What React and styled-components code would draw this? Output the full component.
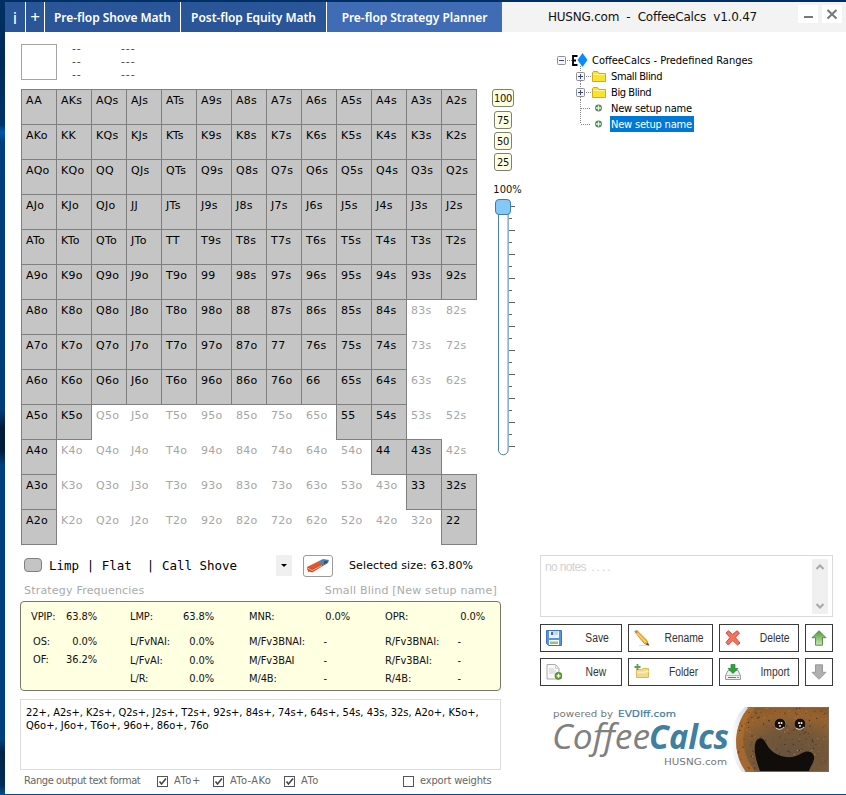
import React from 'react';
import styled, { createGlobalStyle } from 'styled-components';

const Global = createGlobalStyle`
  * { box-sizing: border-box; }
  html, body { margin: 0; padding: 0; }
  body { width: 846px; height: 795px; overflow: hidden; }
`;

const verdana = `'DejaVu Sans', Verdana, sans-serif`;
const tahoma = `'DejaVu Sans Condensed', 'DejaVu Sans', Tahoma, sans-serif`;

const Desktop = styled.div`
  width: 846px;
  height: 795px;
  padding: 2px 0 1px 5px;
  background: linear-gradient(#002f63 0, #002b58 60px, #003468 125px, #0058a8 132px, #003f7c 142px, #003c78 410px, #001b3c 428px, #001b3c 450px, #004080 466px, #00407c 740px, #002448 752px, #002c58 785px, #0a4a8c 794px);
`;
const Window = styled.main`
  display: flex;
  flex-direction: column;
  width: 841px;
  height: 792px;
  background: #fff;
  font-family: ${verdana};
  font-size: 11px;
  color: #111;
  white-space: pre;
`;

const Header = styled.header`
  display: flex;
  height: 30px;
  background: #f3f3f3;
`;
const Tab = styled.div`
  flex: none;
  width: ${p => p.$w}px;
  height: 30px;
  text-align: center;
  border-right: ${p => (p.$active ? 0 : 1)}px solid #fff;
  background: ${p => (p.$active ? '#3f6cb5' : '#2a5699')};
  color: #fff;
  font: ${p => p.$font || "600 12px/31px 'Noto Sans', 'Open Sans', sans-serif"};
  letter-spacing: -0.05px;
`;
const Title = styled.div`
  flex: 1;
  padding-left: 46px;
  font-size: 12px;
  line-height: 31px;
  letter-spacing: -0.22px;
`;
const WinButton = styled.div`
  width: 20px;
  height: 18px;
  margin: 3px 4px 0 0;
  background: #fff;
  svg { display: block; }
`;

const Body = styled.div`
  display: grid;
  grid-template-columns: 535px 306px;
  height: 762px;
`;
const Left = styled.section`
  padding: 12px 0 0 15px;
`;
const Info = styled.div`
  display: flex;
  height: 45px;
  padding-left: 1px;
`;
const Preview = styled.div`
  width: 36px;
  height: 36px;
  border: 1px solid #a5a5a5;
`;
const Dashes = styled.div`
  width: ${p => p.$w}px;
  margin: -2px 0 0 15px;
  font: 11px/13px ${verdana};
  letter-spacing: 0.9px;
  color: #444;
`;
const RangeArea = styled.div`
  display: flex;
  height: 456px;
  padding-left: 1px;
`;
const Matrix = styled.div`
  display: grid;
  grid-template-columns: repeat(13, 35px);
  grid-auto-rows: 35px;
`;
const Cell = styled.div`
  width: 36px;
  height: 36px;
  padding: 4px 0 0 4px;
  line-height: 14px;
  font-size: 11px;
  letter-spacing: 0.3px;
  border: 1px solid ${p => (p.$on ? '#7f7f7f' : 'transparent')};
  background: ${p => (p.$on ? '#c5c5c5' : 'transparent')};
  color: ${p => (p.$on ? '#000' : '#a6a6a6')};
`;
const Weights = styled.div`
  display: flex;
  flex-direction: column;
  align-items: center;
  margin-left: 15px;
  width: 24px;
`;
const Weight = styled.div`
  height: 18px;
  width: ${p => p.$w}px;
  margin-bottom: ${p => p.$gap}px;
  border: 1px solid #808070;
  border-radius: 3px;
  background: #ffffe1;
  text-align: center;
  font: 11px/17px ${tahoma};
  letter-spacing: -0.3px;
`;
const Percent = styled.div`
  margin: 11px 0 0 9px;
  font: 11px/16px ${tahoma};
  letter-spacing: 0;
`;

const Row = styled.div`
  display: flex;
  align-items: center;
  height: 41px;
`;
const Swatch = styled.div`
  width: 18px;
  height: 14px;
  margin: -2px 7px 0 4px;
  border: 1px solid #808080;
  border-radius: 4px;
  background: #c4c4c4;
`;
const Actions = styled.div`
  width: 227px;
  font: 12.5px/16px 'DejaVu Sans Mono', monospace;
  color: #000;
`;
const DropButton = styled.div`
  display: grid;
  place-items: center;
  width: 16px;
  height: 21px;
  background: #f0f0f0;
`;
const EraserButton = styled.div`
  display: grid;
  place-items: center;
  width: 30px;
  height: 22px;
  margin: 0 16px 0 11px;
  border: 1px solid #9a9a9a;
  border-radius: 3px;
`;
const Selected = styled.span`
  font-size: 11px;
  letter-spacing: 0.12px;
  color: #000;
`;
const Caption = styled.div`
  display: flex;
  justify-content: space-between;
  width: 481px;
  height: 15px;
  padding: 0 4px;
  line-height: 9px;
  color: #aaa;
  letter-spacing: 0.2px;
`;
const Stats = styled.div`
  display: grid;
  grid-template-columns: 99px 119px 136px 110px;
  height: 90px;
  width: 481px;
  padding: 7px 0 0 10px;
  border: 1px solid #77776a;
  border-radius: 4px;
  background: #ffffe1;
`;
const Stat = styled.div`
  display: flex;
  justify-content: space-between;
  height: ${p => p.$h}px;
  width: ${p => p.$w}px;
  padding-left: ${p => p.$indent || 0}px;
  padding-right: ${p => p.$right || 0}px;
  font: 11px/16px ${tahoma};
  letter-spacing: -0.1px;
`;
const Output = styled.div`
  width: 481px;
  height: 71px;
  margin-top: 8px;
  padding: 6px 5px;
  border: 1px solid #dcdcdc;
  font: 11px/13px ${tahoma};
  color: #000;
`;
const Formats = styled.div`
  display: flex;
  align-items: center;
  height: 22px;
  padding-left: 4px;
  font: 11px/14px ${tahoma};
  color: #666;
`;
const FormatLabel = styled.span`
  width: ${p => p.$w}px;
  letter-spacing: ${p => p.$ls || 0}px;
`;
const Box = styled.span`
  display: block;
  width: 11px;
  height: 11px;
  margin-right: 6px;
  border: 1px solid #555;
  svg { display: block; }
`;

const Right = styled.section`
  display: flex;
  flex-direction: column;
  width: 293px;
`;
const Tree = styled.div`
  height: 523px;
  padding: 20px 0 0 17px;
  font: 11px/16px ${tahoma};
  color: #000;
`;
const Node = styled.div`
  display: flex;
  align-items: center;
  height: 16px;
  letter-spacing: ${p => p.$ls || 0}px;
  svg { display: block; flex: none; }
`;
const NodeText = styled.span`
  height: 16px;
  line-height: 17px;
  padding: 0 2px 0 1px;
  background: ${p => (p.$selected ? '#0078d7' : 'transparent')};
  color: ${p => (p.$selected ? '#fff' : '#000')};
`;
const Notes = styled.div`
  display: flex;
  justify-content: space-between;
  height: 62px;
  padding: 3px 4px;
  border: 1px solid #d9d9d9;
  color: #d2d2d2;
  font: 12px/16px 'Liberation Sans', Arial, sans-serif;
  letter-spacing: -0.65px;
`;
const Scroll = styled.div`
  display: flex;
  flex-direction: column;
  justify-content: space-between;
  align-items: center;
  width: 16px;
  height: 55px;
  padding: 5px 0;
  background: #f0f0f0;
`;
const Buttons = styled.div`
  display: grid;
  grid-template-columns: 82px 85px 80px 28px;
  grid-auto-rows: 28px;
  gap: 6px;
  margin-top: 7px;
`;
const Button = styled.div`
  display: flex;
  align-items: center;
  padding-left: 5px;
  border: 1px solid #3a3a3a;
  color: #333;
  font: 12px/16px 'Liberation Sans', Arial, sans-serif;
  svg { display: block; flex: none; }
`;
const ButtonLabel = styled.span`
  flex: 1;
  padding-left: ${p => p.$pad}px;
  text-align: center;
  transform: scaleX(0.86);
`;
const Brand = styled.div`
  margin: 21px 0 0 13px;
  svg { display: block; }
`;

const RANKS = 'AKQJT98765432';
const FILLED = [13, 13, 13, 13, 13, 13, 11, 11, 11];
const isOn = (r, c) => {
  if (r < 9) return c < FILLED[r];
  if (r === 9) return c < 2 || c === 9 || c === 10;
  if (r === 10) return c === 0 || c === 10 || c === 11;
  if (r === 11) return c === 0 || c === 11 || c === 12;
  return c === 0 || c === 12;
};
const hand = (r, c) =>
  r === c ? RANKS[r] + RANKS[r] : r < c ? `${RANKS[r]}${RANKS[c]}s` : `${RANKS[c]}${RANKS[r]}o`;

const SliderTrack = () => (
  <svg width="24" height="260" viewBox="0 0 24 260">
    <path d="M3.5 9V251a4.8 4.8 0 0 0 9.600 0V9" fill="#fff" stroke="#4a7fa8" />
    {Array.from({ length: 21 }, (_, i) => (
      <path key={i} d={`M14 ${7.5 + i * 12}h${i % 2 ? 3 : 6}`} stroke="#666" />
    ))}
    <rect x="0.500" y="0.500" width="15" height="15" rx="3.500" fill="#84c8f8" stroke="#3d7eae" />
  </svg>
);
const Slider = styled.div`
  margin: 1px 0 0 4px;
  align-self: flex-start;
  svg { display: block; }
`;

const Eraser = () => (
  <svg width="24" height="16" viewBox="0 0 24 16">
    <path d="M1 9L13 3l4 4-11 6-4 1z" fill="#e2562b" />
    <path d="M13 3l4-2 6 1-1 3-5 3-4-2z" fill="#5583b0" />
    <path d="M18 3l4-.5-1 2.500-3 1.500z" fill="#34566f" />
    <path d="M1 9l5 2 11-5v2L6 14.500 2 12.500z" fill="#d04a20" />
    <path d="M1.500 10l4.500 2.500 10-5" stroke="#f6b39c" fill="none" />
  </svg>
);
const Check = ({ on }) => (
  <Box>
    {on && (
      <svg width="9" height="9" viewBox="0 0 9 9">
        <path d="M1.500 4.500l2 2.500L8 1.500" fill="none" stroke="#444" strokeWidth="1.600" />
      </svg>
    )}
  </Box>
);
const Toggle = ({ x, plus }) => (
  <g>
    <rect x={x + 0.5} y="4.500" width="8" height="8" rx="1" fill="#f5f5f5" stroke="#8f8f8f" />
    <path d={`M${x + 2} 8.500h5${plus ? `M${x + 4.5} 6v5` : ''}`} stroke="#36478c" />
  </g>
);
const dots = { stroke: '#888', strokeDasharray: '1 1', fill: 'none' };
const RootIcon = () => (
  <svg width="34" height="16">
    <Toggle x={0} />
    <path d="M10 8.500h5M23.500 14v2" {...dots} />
    <path d="M20.500 4h-4.500v9h4.500M16 8.500h3" stroke="#000" strokeWidth="1.800" fill="none" />
    <path d="M25.500 1l5 7-5 7-5-7z" fill="#0a8cff" />
  </svg>
);
const FolderNodeIcon = () => (
  <svg width="53" height="16">
    <path d="M23.500 0v4M23.500 13v3M29 8.500h5" {...dots} />
    <Toggle x={19} plus />
    <path d="M35.500 13.500v-9l1-1h4l1.500 2h6.500v8z" fill="#fbe32e" stroke="#d0a91c" />
    <path d="M36.500 6.500h11" stroke="#fff59a" />
  </svg>
);
const LeafIcon = ({ last }) => (
  <svg width="53" height="16">
    <path d={`M23.500 0v${last ? 8 : 16}M24 8.500h10`} {...dots} />
    <circle cx="41.500" cy="8" r="3.400" fill="#4d8950" />
    <path d="M39 8h5M41.500 5.500v5" stroke="#e5f3e2" strokeWidth="1.300" />
  </svg>
);
const Chevron = ({ down }) => (
  <svg width="8" height="6" viewBox="0 0 8 6">
    <path d={down ? 'M0.500 1l3.500 3.500L7.500 1' : 'M0.500 5L4 1.500 7.500 5'} fill="none" stroke="#a8a8a8" strokeWidth="2" />
  </svg>
);

const icons = {
  save: (
    <>
      <path d="M.5.500h15v15h-13l-2-2z" fill="#5b93dc" stroke="#3f74bd" />
      <path d="M3 1h10v7H3z" fill="#e9f3fd" />
      <path d="M5 1h7v4H5z" fill="#c2d8ef" />
      <path d="M5 2h2v3H5z" fill="#3b70b8" />
      <path d="M3 10h10v5H3z" fill="#fff" />
      <path d="M4 11.500h8v2.500H4z" fill="#8dc86c" />
    </>
  ),
  rename: (
    <>
      <path d="M5 15.500h10" stroke="#ddd" />
      <path d="M.7 1.600L2.800.4 13 10.500l1.700 4.700-4.500-1.800z" fill="#f6b93b" stroke="#c07d18" strokeWidth=".8" />
      <path d="M2 2.500l9.500 9.500" stroke="#ffe18b" />
      <path d="M.7 1.600L2.800.4l1.500 1.700-2 1.500z" fill="#d87b62" />
      <path d="M13 12.800l2.500 2.700-3.500-1z" fill="#443" />
    </>
  ),
  del: (
    <path d="M1 3l2.500-2.200L7.500 4.500 12 .8 14.500 3l-4.200 4.500L15 13l-2.500 2-4.700-4.500L3.300 15 1 12.500l4-5z" fill="#f4735e" stroke="#d04a3a" />
  ),
  up: <path d="M8 .7l7 7h-3.500v7.500h-7V7.700H1z" fill="url(#upFill)" stroke="#5c8f47" />,
  fresh: (
    <>
      <path d="M1 .5h8.500l3.500 4v10.500H1z" fill="#f8f8f8" stroke="#aaa" />
      <path d="M9.500.5v4H13M3 5h5M3 7h7M3 9h6" fill="none" stroke="#ccc" />
      <circle cx="12.500" cy="11.800" r="3.600" fill="#5aa02c" stroke="#3c7d1b" strokeWidth=".6" />
      <path d="M10.500 11.800h4M12.500 9.800v4" stroke="#fff" strokeWidth="1.300" />
    </>
  ),
  folder: (
    <>
      <path d="M2.500 13.500v-8h5L9 4.500h5.500v9z" fill="#f4d98a" stroke="#dcba5c" />
      <path d="M3.500 8.500h7l1-1h3" fill="none" stroke="#fff1bc" strokeWidth="1.500" />
      <path d="M.5 3h6M3.500 0v6" stroke="#5da04c" strokeWidth="1.800" />
    </>
  ),
  load: (
    <>
      <path d="M3 6.500h10l2.500 5v4H.5v-4z" fill="#eee" stroke="#999" />
      <path d="M1 11.500h14" stroke="#bbb" />
      <path d="M3 13.500h8" stroke="#777" />
      <path d="M12 13.500h2" stroke="#65bb45" />
      <path d="M6 0.500h4v4h3l-5 5-5-5h3z" fill="#31a437" stroke="#1e8128" strokeWidth=".7" />
    </>
  ),
  down: <path d="M8 15.300l7-7h-3.500V.800h-7v7.500H1z" fill="#b0b0b0" stroke="#9a9a9a" />,
};
const Icon = ({ name }) => (
  <svg width="16" height="16" viewBox="0 0 16 16">
    {name === 'up' && (
      <linearGradient id="upFill" x2="0" y2="1">
        <stop offset="0" stopColor="#4f9a35" />
        <stop offset="1" stopColor="#c9e6b8" />
      </linearGradient>
    )}
    {icons[name]}
  </svg>
);

const BUTTONS = [
  ['save', 'Save', 13], ['rename', 'Rename', 7], ['del', 'Delete', 12], ['up'],
  ['fresh', 'New', 10], ['folder', 'Folder', 6], ['load', 'Import', 13], ['down'],
];

const specks = Array.from({ length: 260 }, (_, i) => {
  const x = 182 + ((i * 47.3 + i * i * 3.1) % 93);
  const y = 1 + ((i * 29.7 + i * i * 1.7) % 62);
  return [x, y, 0.25 + (i % 4) * 0.13];
});
const Logo = () => (
  <svg width="277" height="66" viewBox="0 0 277 66">
    <defs>
      <radialGradient id="foam" cx=".6" cy=".75" r=".8">
        <stop offset="0" stopColor="#65523f" />
        <stop offset=".5" stopColor="#755839" />
        <stop offset=".8" stopColor="#96622f" />
        <stop offset="1" stopColor="#8a5a2c" />
      </radialGradient>
      <linearGradient id="rim"><stop offset="0" stopColor="#fff" /><stop offset="1" stopColor="#c9ced6" /></linearGradient>
      <clipPath id="cup"><path d="M196 0H276V65H193C178 45 181 17 196 0z" /></clipPath>
    </defs>
    <text x="0" y="10" fontFamily="DejaVu Sans" fontSize="9.500" fill="#777" textLength="60" lengthAdjust="spacingAndGlyphs">powered by</text>
    <text x="65" y="10" fontFamily="DejaVu Sans" fontSize="9.500" fill="#3b7ca5" stroke="#3b7ca5" strokeWidth=".2" textLength="58" lengthAdjust="spacingAndGlyphs">EVDIff.com</text>
    <text x="-1" y="42" fontFamily="Open Sans" fontStyle="italic" fontSize="34" fill="#808080" textLength="98" lengthAdjust="spacingAndGlyphs">Coffee</text>
    <text x="96" y="42" fontFamily="Open Sans" fontStyle="italic" fontWeight="700" fontSize="34" fill="#3f7f9f" textLength="80" lengthAdjust="spacingAndGlyphs">Calcs</text>
    <text x="111" y="58" fontFamily="DejaVu Sans" fontSize="9.500" fill="#777" textLength="63" lengthAdjust="spacingAndGlyphs">HUSNG.com</text>
    <path d="M192 0C172 18 175 48 189 65h10V0z" fill="url(#rim)" />
    <g clipPath="url(#cup)">
      <rect x="180" width="96" height="65" fill="url(#foam)" />
      <path d="M199-2C181 18 182 45 198 67" fill="none" stroke="#b8712f" strokeWidth="9" opacity=".6" />
      {specks.map(([x, y, r], i) => <circle key={i} cx={x} cy={y} r={r} fill={i % 3 ? '#3d2a1a' : '#b9843f'} />)}
      <path d="M207 64C202 52 199 36 205 32c5-3 7 3 11 9 8 10 24 12 33 5 7-4 13 0 12 6-1 5-4 8-5 12z" fill="#100d0b" />
    </g>
    {[227, 247].map(x => (
      <g key={x}>
        <circle cx={x} cy="17" r="5.800" fill="#17100c" stroke="#a77b4d" strokeWidth=".6" />
        <path d={`M${x - 4} 21q4 3 8-1`} fill="none" stroke="#e7d8c3" />
        <circle cx={x - 1} cy="16" r="1" fill="#fff" />
        <circle cx={x + 1.5} cy="16" r="1" fill="#fff" />
        <circle cx={x} cy="19" r=".9" fill="#fff" />
      </g>
    ))}
    <path d="M194 .5H275.500V64.500H192" fill="none" stroke="#777" opacity=".6" />
  </svg>
);

export default function App() {
  return (
    <Desktop>
      <Global />
      <Window>
        <Header>
          <Tab $w={21} $font="17px/31px 'Noto Sans', sans-serif">i</Tab>
          <Tab $w={19} $font="17px/29px 'Noto Sans', sans-serif">+</Tab>
          <Tab $w={136}>Pre-flop Shove Math</Tab>
          <Tab $w={146}>Post-flop Equity Math</Tab>
          <Tab $w={175} $active>Pre-flop Strategy Planner</Tab>
          <Title>HUSNG.com  -  CoffeeCalcs  v1.0.47</Title>
          <WinButton>
            <svg width="20" height="18"><path d="M6 12h9" stroke="#777" strokeWidth="2" /></svg>
          </WinButton>
          <WinButton>
            <svg width="20" height="18"><path d="M5.500 5l9 8.500M14.500 5l-9 8.500" stroke="#777" strokeWidth="2" /></svg>
          </WinButton>
        </Header>
        <Body>
          <Left>
            <Info>
              <Preview />
              <Dashes $w={34}>{'--\n--\n--'}</Dashes>
              <Dashes $w={30}>{'---\n---\n---'}</Dashes>
            </Info>
            <RangeArea>
              <Matrix>
                {[...RANKS].map((_, r) =>
                  [...RANKS].map((__, c) => (
                    <Cell key={`${r}-${c}`} $on={isOn(r, c)}>{hand(r, c)}</Cell>
                  )))}
              </Matrix>
              <Weights>
                <Weight $w={22} $gap={4}>100</Weight>
                <Weight $w={18} $gap={3}>75</Weight>
                <Weight $w={18} $gap={3}>50</Weight>
                <Weight $w={18} $gap={0}>25</Weight>
                <Percent>100%</Percent>
                <Slider><SliderTrack /></Slider>
              </Weights>
            </RangeArea>
            <Row>
              <Swatch />
              <Actions>{'Limp | Flat  | Call Shove'}</Actions>
              <DropButton>
                <svg width="6" height="3"><path d="M0 0h6L3 3z" /></svg>
              </DropButton>
              <EraserButton><Eraser /></EraserButton>
              <Selected>Selected size: 63.80%</Selected>
            </Row>
            <Caption>
              <span>Strategy Frequencies</span>
              <span>Small Blind [New setup name]</span>
            </Caption>
            <Stats>
              <div>
                <Stat $h={25} $w={66}><span>VPIP:</span><span>63.8%</span></Stat>
                <Stat $h={18} $w={66} $indent={2}><span>OS:</span><span>0.0%</span></Stat>
                <Stat $h={18} $w={66} $indent={2}><span>OF:</span><span>36.2%</span></Stat>
              </div>
              <div>
                <Stat $h={25} $w={84}><span>LMP:</span><span>63.8%</span></Stat>
                <Stat $h={19} $w={84}><span>L/FvNAI:</span><span>0.0%</span></Stat>
                <Stat $h={18} $w={84}><span>L/FvAI:</span><span>0.0%</span></Stat>
                <Stat $h={18} $w={84}><span>L/R:</span><span>0.0%</span></Stat>
              </div>
              <div>
                <Stat $h={25} $w={101}><span>MNR:</span><span>0.0%</span></Stat>
                <Stat $h={19} $w={101} $right={23}><span>M/Fv3BNAI:</span><span>-</span></Stat>
                <Stat $h={18} $w={101} $right={23}><span>M/Fv3BAI</span><span>-</span></Stat>
                <Stat $h={18} $w={101} $right={23}><span>M/4B:</span><span>-</span></Stat>
              </div>
              <div>
                <Stat $h={25} $w={100}><span>OPR:</span><span>0.0%</span></Stat>
                <Stat $h={19} $w={100} $right={24}><span>R/Fv3BNAI:</span><span>-</span></Stat>
                <Stat $h={18} $w={100} $right={24}><span>R/Fv3BAI:</span><span>-</span></Stat>
                <Stat $h={18} $w={100} $right={24}><span>R/4B:</span><span>-</span></Stat>
              </div>
            </Stats>
            <Output>{'22+, A2s+, K2s+, Q2s+, J2s+, T2s+, 92s+, 84s+, 74s+, 64s+, 54s, 43s, 32s, A2o+, K5o+,\nQ6o+, J6o+, T6o+, 96o+, 86o+, 76o'}</Output>
            <Formats>
              <FormatLabel $w={133} $ls={-0.4}>Range output text format</FormatLabel>
              <Check on /><FormatLabel $w={39} $ls={0.6}>ATo+</FormatLabel>
              <Check on /><FormatLabel $w={54} $ls={0.4}>ATo-AKo</FormatLabel>
              <Check on /><FormatLabel $w={102} $ls={0.6}>ATo</FormatLabel>
              <Check /><FormatLabel $w={80} $ls={-0.15}>export weights</FormatLabel>
            </Formats>
          </Left>
          <Right>
            <Tree>
              <Node><RootIcon /><NodeText>CoffeeCalcs - Predefined Ranges</NodeText></Node>
              <Node $ls={-0.4}><FolderNodeIcon /><NodeText>Small Blind</NodeText></Node>
              <Node $ls={-0.4}><FolderNodeIcon /><NodeText>Big Blind</NodeText></Node>
              <Node $ls={-0.2}><LeafIcon /><NodeText>New setup name</NodeText></Node>
              <Node $ls={-0.2}><LeafIcon last /><NodeText $selected>New setup name</NodeText></Node>
            </Tree>
            <Notes>
              <span>no notes  . . . .</span>
              <Scroll><Chevron /><Chevron down /></Scroll>
            </Notes>
            <Buttons>
              {BUTTONS.map(([icon, label, pad]) => (
                <Button key={icon}>
                  <Icon name={icon} />
                  {label && <ButtonLabel $pad={pad}>{label}</ButtonLabel>}
                </Button>
              ))}
            </Buttons>
            <Brand><Logo /></Brand>
          </Right>
        </Body>
      </Window>
    </Desktop>
  );
}
